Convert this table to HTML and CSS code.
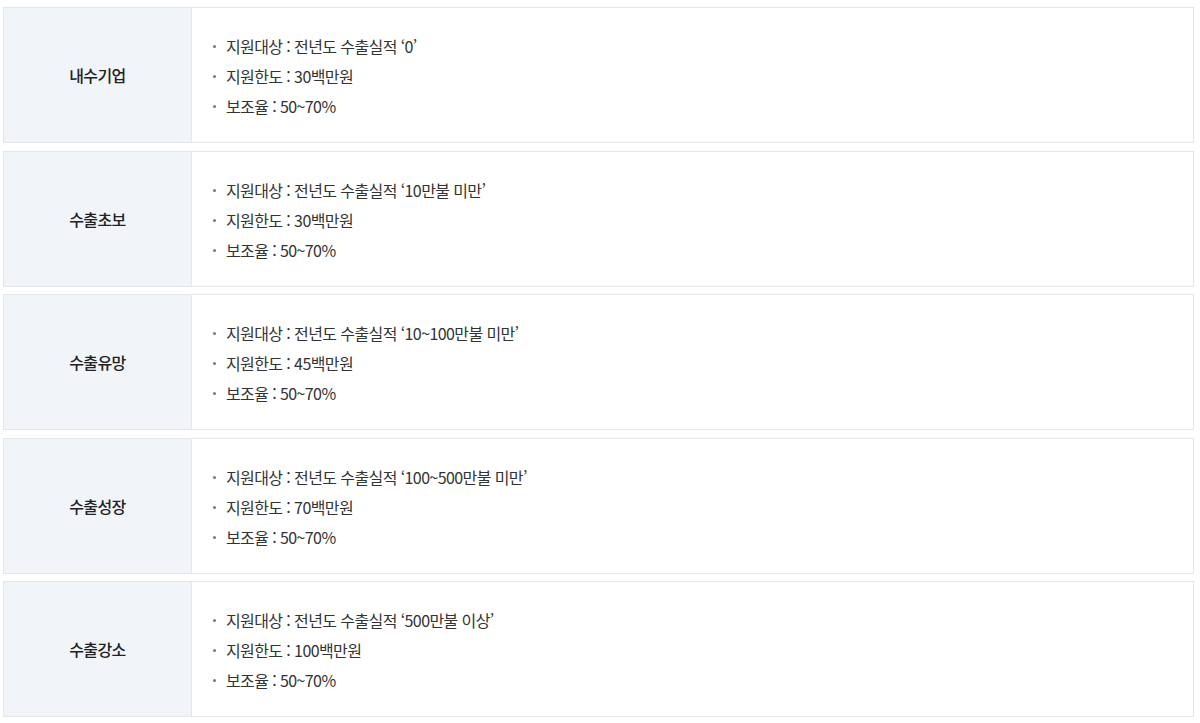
FILE: index.html
```html
<!DOCTYPE html>
<html lang="ko">
<head>
  <meta charset="UTF-8">
  <title>지원 유형</title>
  <link rel="stylesheet" href="styles.css">
</head>
<body>

  <div class="support-list">
    <div class="support-row">
      <div class="support-type">내수기업</div>
      <ul class="support-info">
        <li>지원대상 : 전년도 수출실적 ‘0’</li>
        <li>지원한도 : 30백만원</li>
        <li>보조율 : 50~70%</li>
      </ul>
    </div>

    <div class="support-row">
      <div class="support-type">수출초보</div>
      <ul class="support-info">
        <li>지원대상 : 전년도 수출실적 ‘10만불 미만’</li>
        <li>지원한도 : 30백만원</li>
        <li>보조율 : 50~70%</li>
      </ul>
    </div>

    <div class="support-row">
      <div class="support-type">수출유망</div>
      <ul class="support-info">
        <li>지원대상 : 전년도 수출실적 ‘10~100만불 미만’</li>
        <li>지원한도 : 45백만원</li>
        <li>보조율 : 50~70%</li>
      </ul>
    </div>

    <div class="support-row">
      <div class="support-type">수출성장</div>
      <ul class="support-info">
        <li>지원대상 : 전년도 수출실적 ‘100~500만불 미만’</li>
        <li>지원한도 : 70백만원</li>
        <li>보조율 : 50~70%</li>
      </ul>
    </div>

    <div class="support-row">
      <div class="support-type">수출강소</div>
      <ul class="support-info">
        <li>지원대상 : 전년도 수출실적 ‘500만불 이상’</li>
        <li>지원한도 : 100백만원</li>
        <li>보조율 : 50~70%</li>
      </ul>
    </div>
  </div>

</body>
</html>
```

FILE: styles.css
```css
body {
  margin: 0;
  padding: 7px 6px 0 3px;
  background: #fff;
  font-family: "Noto Sans CJK KR", "Noto Sans", sans-serif;
  color: #333;
}
.support-list {
  display: flex;
  flex-direction: column;
  gap: 7.5px;
}
.support-row {
  display: flex;
  border: 1px solid #e4e6e9;
  height: 136px;
  box-sizing: border-box;
}
.support-type {
  width: 187px;
  flex-shrink: 0;
  background: #f1f4f9;
  border-right: 1px solid #e4e6e9;
  display: flex;
  align-items: center;
  justify-content: center;
  font-size: 16px;
  font-weight: 500;
  color: #222;
  letter-spacing: -0.6px;
}
.support-info {
  list-style: none;
  margin: 0;
  padding: 23px 0 0 21px;
}
.support-info li {
  position: relative;
  padding-left: 13px;
  line-height: 30px;
  font-size: 16px;
  letter-spacing: -0.6px;
  color: #333;
}
.support-info li::before {
  content: "";
  position: absolute;
  left: 0;
  top: 14px;
  width: 3px;
  height: 3px;
  border-radius: 50%;
  background: #777;
}
```
